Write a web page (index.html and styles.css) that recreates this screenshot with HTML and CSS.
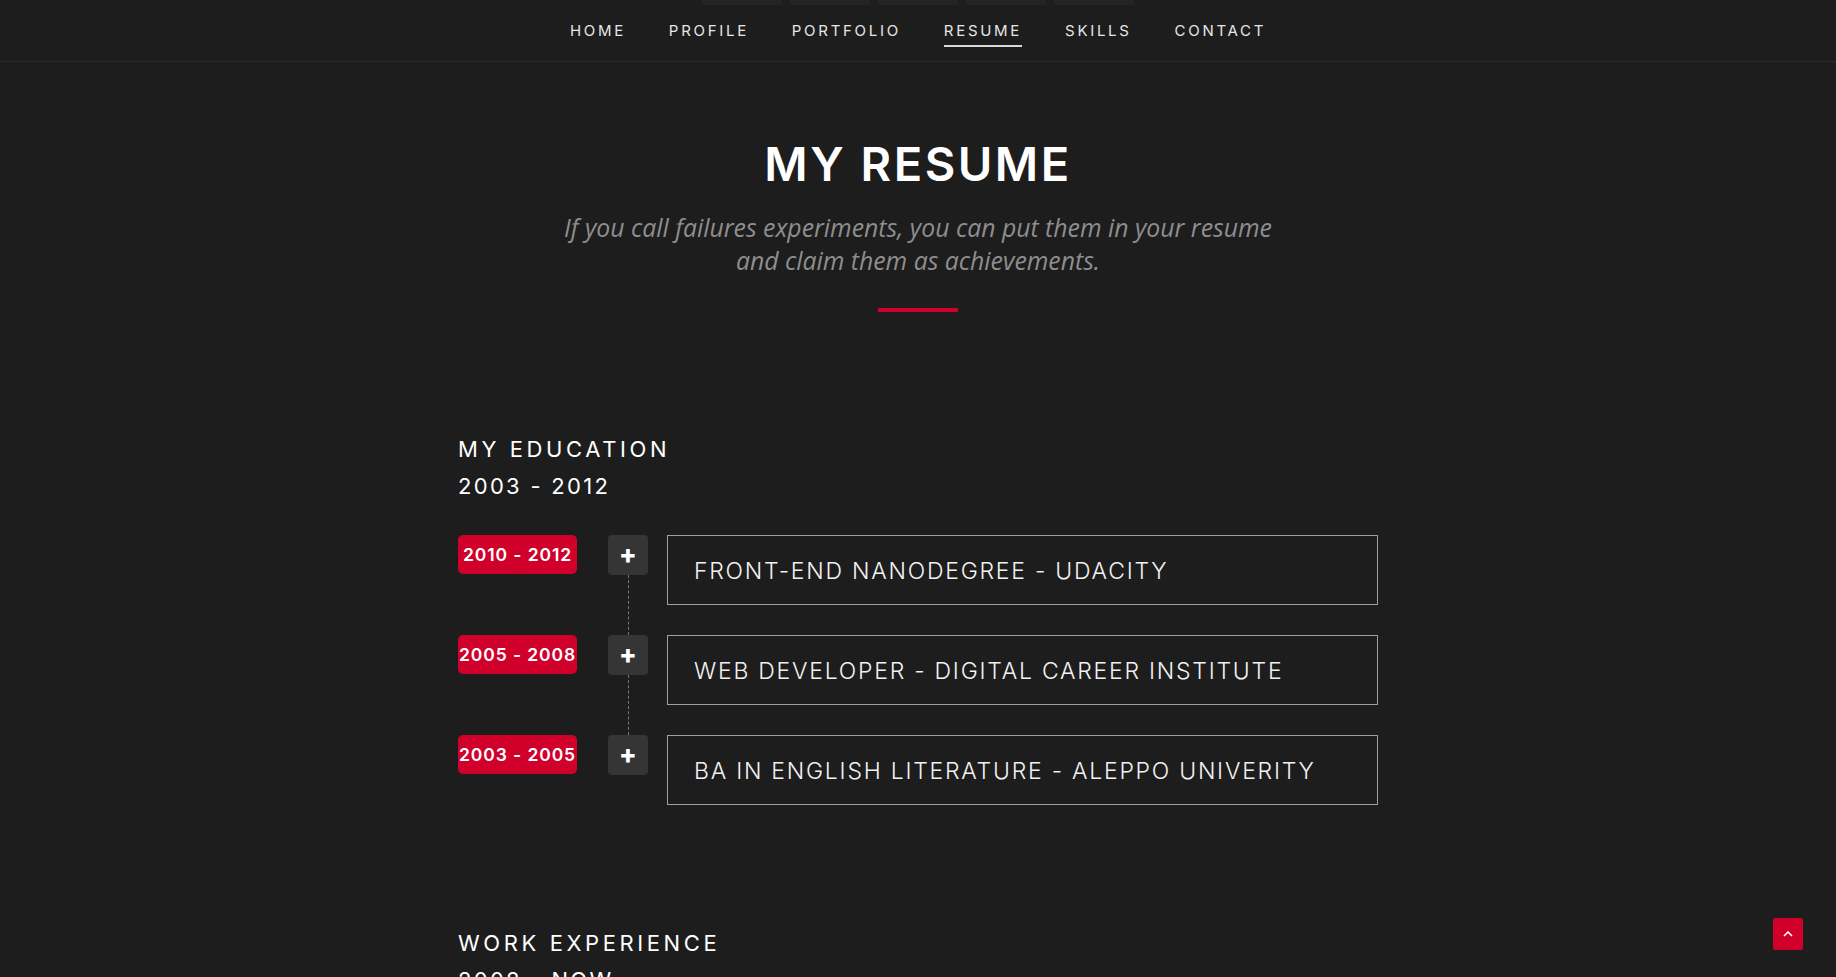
FILE: index.html
```html
<!DOCTYPE html>
<html lang="en">
<head>
<meta charset="utf-8">
<title>My Resume</title>
<link rel="stylesheet" href="styles.css">
</head>
<body>
<header class="navbar">
  <div class="ghosts">
    <span></span><span></span><span></span><span></span><span></span>
  </div>
  <nav class="nav">
    <a href="#">HOME</a>
    <a href="#">PROFILE</a>
    <a href="#">PORTFOLIO</a>
    <a href="#" class="active">RESUME</a>
    <a href="#">SKILLS</a>
    <a href="#">CONTACT</a>
  </nav>
</header>

<main class="resume">
  <section class="intro">
    <h1 class="title">MY RESUME</h1>
    <p class="quote">If you call failures experiments, you can put them in your resume<br>and claim them as achievements.</p>
    <div class="bar"></div>
  </section>

  <section class="group">
    <h2 class="group-title">MY EDUCATION<br><span class="years">2003 - 2012</span></h2>
    <div class="timeline">
      <div class="row">
        <span class="date">2010 - 2012</span>
        <div class="mid"><span class="plus">+</span><span class="line"></span></div>
        <div class="card">FRONT-END NANODEGREE - UDACITY</div>
      </div>
      <div class="row">
        <span class="date">2005 - 2008</span>
        <div class="mid"><span class="plus">+</span><span class="line"></span></div>
        <div class="card">WEB DEVELOPER - DIGITAL CAREER INSTITUTE</div>
      </div>
      <div class="row last">
        <span class="date">2003 - 2005</span>
        <div class="mid"><span class="plus">+</span></div>
        <div class="card">BA IN ENGLISH LITERATURE - ALEPPO UNIVERITY</div>
      </div>
    </div>
  </section>

  <section class="group work">
    <h2 class="group-title">WORK EXPERIENCE<br><span class="years">2008 - NOW</span></h2>
  </section>
</main>

<a href="#" class="to-top" aria-label="Back to top">
  <svg width="10" height="6" viewBox="0 0 10 6"><path d="M1 5 L5 1 L9 5" fill="none" stroke="#fff" stroke-width="1.6"/></svg>
</a>
</body>
</html>
```

FILE: styles.css
```css
* { box-sizing: border-box; }

html, body {
  margin: 0;
  padding: 0;
  background: #1d1d1d;
  color: #fff;
  font-family: "Inter", "DejaVu Sans", sans-serif;
  overflow: hidden;
  height: 977px;
}

.navbar {
  position: relative;
  height: 62px;
  border-bottom: 1px solid #2a2a2a;
  display: flex;
  justify-content: center;
  align-items: center;
}

.ghosts {
  position: absolute;
  top: 0;
  left: 702px;
  display: flex;
  gap: 8px;
}
.ghosts span {
  width: 80px;
  height: 5px;
  background: #242424;
}

.nav {
  display: flex;
  gap: 43px;
  padding-bottom: 2px;
}
.nav a {
  color: #e6e6e6;
  text-decoration: none;
  font-size: 15px;
  font-weight: 400;
  letter-spacing: 2.7px;
  padding-bottom: 5px;
  border-bottom: 2px solid transparent;
  margin-top: 9px;
}
.nav a.active {
  border-bottom-color: #d8d8d8;
}

.resume {
  width: 920px;
  margin: 0 auto;
}

.intro {
  display: flex;
  flex-direction: column;
  align-items: center;
  padding-top: 74px;
}

.title {
  margin: 0;
  font-size: 47px;
  font-weight: 600;
  letter-spacing: 2.5px;
  line-height: 56px;
}

.quote {
  margin: 19px 0 0;
  font-family: "Open Sans", sans-serif;
  font-style: italic;
  font-size: 24.8px;
  line-height: 33px;
  color: #8e8e8e;
  text-align: center;
}

.bar {
  width: 80px;
  height: 4px;
  background: #d0002b;
  margin-top: 31px;
}

.group {
  margin-top: 119px;
}

.group-title {
  margin: 0;
  font-size: 22px;
  font-weight: 400;
  letter-spacing: 3.6px;
  line-height: 37px;
}
.years {
  letter-spacing: 2.3px;
}

.timeline {
  margin-top: 30px;
  display: flex;
  flex-direction: column;
}

.row {
  display: flex;
  align-items: stretch;
  height: 100px;
}
.row.last { height: 70px; }

.date {
  width: 119px;
  height: 39px;
  background: #d0002b;
  border-radius: 5px;
  display: flex;
  align-items: center;
  justify-content: center;
  font-size: 17.5px;
  font-weight: 600;
  letter-spacing: 0.9px;
  white-space: nowrap;
}

.mid {
  width: 40px;
  margin-left: 31px;
  display: flex;
  flex-direction: column;
  align-items: center;
}
.plus {
  width: 40px;
  height: 40px;
  flex: none;
  background: #353535;
  border-radius: 4px;
  display: flex;
  align-items: center;
  justify-content: center;
  font-size: 26px;
  font-weight: 800;
  line-height: 1;
  padding-bottom: 3px;
}
.line {
  flex: 1;
  border-left: 1px dashed #777;
}

.card {
  margin-left: 19px;
  width: 711px;
  height: 70px;
  border: 1px solid #a0a0a0;
  display: flex;
  align-items: center;
  padding-left: 26px;
  padding-top: 2px;
  font-size: 23px;
  font-weight: 300;
  letter-spacing: 1.75px;
  color: #f2f2f2;
}

.work {
  margin-top: 120px;
}

.to-top {
  position: fixed;
  left: 1773px;
  top: 918px;
  width: 30px;
  height: 32px;
  background: #d0002b;
  border-radius: 2px;
  display: flex;
  align-items: center;
  justify-content: center;
}
```
